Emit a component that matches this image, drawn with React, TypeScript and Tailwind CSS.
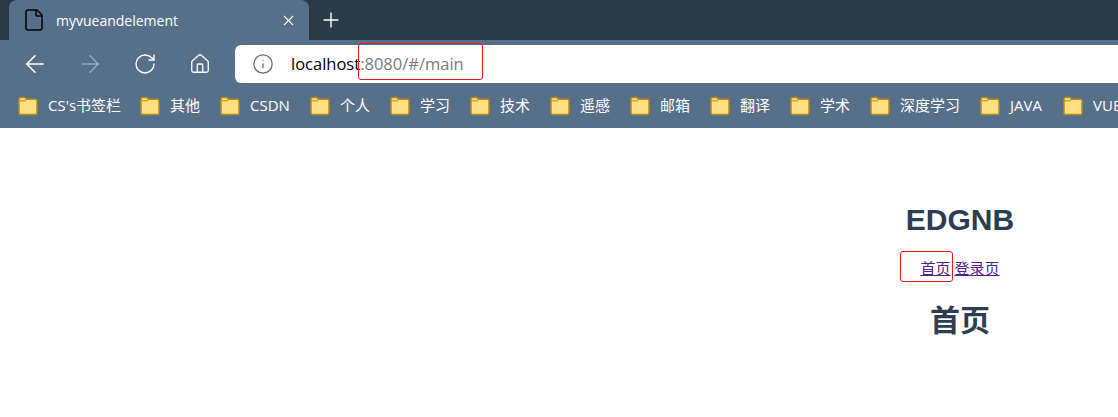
import { ArrowLeft, ArrowRight, File, Home, Info, Plus, RotateCw, X } from "lucide-react";

const bookmarks = [
  { label: "CS's书签栏", width: "w-[122px]" },
  { label: "其他", width: "w-[80px]" },
  { label: "CSDN", width: "w-[90px]" },
  { label: "个人", width: "w-[80px]" },
  { label: "学习", width: "w-[80px]" },
  { label: "技术", width: "w-[80px]" },
  { label: "遥感", width: "w-[80px]" },
  { label: "邮箱", width: "w-[80px]" },
  { label: "翻译", width: "w-[80px]" },
  { label: "学术", width: "w-[80px]" },
  { label: "深度学习", width: "w-[110px]" },
  { label: "JAVA", width: "w-[83px]" },
  { label: "VUE", width: "w-[80px]" },
];

const FolderIcon = () => (
  <svg width="20" height="20" viewBox="0 0 20 20" className="shrink-0">
    <path
      d="M1 3.5C1 2.4 1.7 1.5 2.8 1.5H6.5C7.3 1.5 7.8 2 8.2 3.2H17.5C18.4 3.2 19 3.9 19 4.8V17C19 18 18.3 18.6 17.4 18.6H2.6C1.7 18.6 1 18 1 17Z"
      fill="#ffdf80"
      stroke="#b58a1a"
      strokeWidth="1.5"
    />
    <path d="M1.5 4.8H8" stroke="#b58a1a" strokeWidth="1" />
  </svg>
);

const BookmarkItem = ({ label, width }: { label: string; width: string }) => (
  <div className={`flex shrink-0 items-center gap-[10px] ${width}`}>
    <FolderIcon />
    <span className="whitespace-nowrap text-[15px] text-white">{label}</span>
  </div>
);

export default function App() {
  return (
    <div className="relative h-[417px] w-[1118px] overflow-hidden bg-white font-['Open_Sans','Noto_Sans_CJK_SC',sans-serif]">
      <div className="h-[128px] bg-[#56708a]">
        {/* tab strip */}
        <div className="flex h-[40px] items-stretch bg-[#2c3a47]">
          <div className="w-[9px] rounded-br-lg bg-[#2c3a47]" />
          <div className="flex w-[300px] items-center rounded-t-lg bg-[#56708a] pl-[13px] pr-[12px]">
            <File className="h-[24px] w-[24px] text-black" strokeWidth={1.5} />
            <span className="ml-[10px] flex-1 text-[14px] text-white">myvueandelement</span>
            <X className="h-[17px] w-[17px] text-white" strokeWidth={1.5} />
          </div>
          <div className="flex w-[44px] items-center justify-center">
            <Plus className="h-[24px] w-[24px] text-white" strokeWidth={1.4} />
          </div>
        </div>

        {/* toolbar */}
        <div className="flex h-[43px] items-center pl-[21px] pt-[5px]">
          <ArrowLeft className="h-[28px] w-[28px] text-white" strokeWidth={1.3} />
          <ArrowRight className="ml-[27px] h-[28px] w-[28px] text-white/40" strokeWidth={1.3} />
          <RotateCw className="ml-[29px] h-[24px] w-[24px] text-white" strokeWidth={1.4} />
          <Home className="ml-[32px] h-[22px] w-[22px] text-white" strokeWidth={1.4} />
          <div className="ml-[24px] flex h-[38px] flex-1 items-center rounded-l-md bg-white pl-[17px]">
            <Info className="h-[22px] w-[22px] text-[#6b6b6b]" strokeWidth={1.4} />
            <span className="ml-[17px] text-[16.5px] text-black">
              localhost<span className="text-[#7a7a7a]">:8080/#/main</span>
            </span>
          </div>
        </div>

        {/* bookmarks */}
        <div className="flex h-[45px] items-center overflow-hidden pl-[18px]">
          {bookmarks.map((item) => (
            <BookmarkItem key={item.label} label={item.label} width={item.width} />
          ))}
        </div>
      </div>

      {/* page */}
      <div className="flex justify-end">
        <div className="flex w-[316px] flex-col items-center text-[#2c3e50] font-['Liberation_Sans','Noto_Sans_CJK_SC',sans-serif]">
          <h1 className="mt-[74px] text-[30px] font-bold leading-[36px]">EDGNB</h1>
          <div className="mt-[21px] text-[15px] leading-[20px]">
            <a href="#" className="text-[#551a8b] underline">首页</a>
            <span className="text-[#2c3e50]"> </span>
            <a href="#" className="text-[#551a8b] underline">登录页</a>
          </div>
          <h2 className="mt-[22px] text-[30px] font-bold leading-[40px]">首页</h2>
        </div>
      </div>

      {/* annotation boxes */}
      <div className="absolute left-[358px] top-[43px] h-[37px] w-[125px] rounded-[3px] border border-[#f01818]" />
      <div className="absolute left-[900px] top-[251px] h-[31px] w-[53px] rounded-[3px] border border-[#f01818]" />
    </div>
  );
}
